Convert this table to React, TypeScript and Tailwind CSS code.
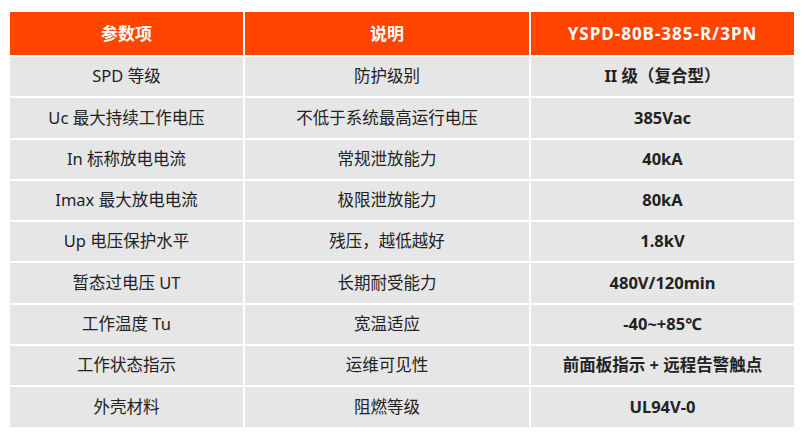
const rows: [string, string, string][] = [
  ["SPD 等级", "防护级别", "II 级（复合型）"],
  ["Uc 最大持续工作电压", "不低于系统最高运行电压", "385Vac"],
  ["In 标称放电电流", "常规泄放能力", "40kA"],
  ["Imax 最大放电电流", "极限泄放能力", "80kA"],
  ["Up 电压保护水平", "残压，越低越好", "1.8kV"],
  ["暂态过电压 UT", "长期耐受能力", "480V/120min"],
  ["工作温度 Tu", "宽温适应", "-40~+85℃"],
  ["工作状态指示", "运维可见性", "前面板指示 + 远程告警触点"],
  ["外壳材料", "阻燃等级", "UL94V-0"],
];

export default function App() {
  return (
    <div className="h-[438px] w-[806px] bg-white pl-[10px] pt-[12px] font-['Noto_Sans','Noto_Sans_CJK_SC',sans-serif] text-[16.5px] text-[#222]">
      <div className="grid w-[784px] grid-cols-[233px_284px_263px] gap-x-[2px] gap-y-[2px]">
        <div className="flex h-[43px] items-center justify-center bg-[#ff4500] text-[17px] font-bold text-white">
          参数项
        </div>
        <div className="flex h-[43px] items-center justify-center bg-[#ff4500] text-[17px] font-bold text-white">
          说明
        </div>
        <div className="flex h-[43px] items-center justify-center bg-[#ff4500] text-[17px] font-bold tracking-[1px] text-white">
          YSPD-80B-385-R/3PN
        </div>
        {rows.map((r, i) => (
          <div key={i} className="contents">
            <div className="flex h-[39.3px] items-center justify-center bg-[#e6e6e6]">{r[0]}</div>
            <div className="flex h-[39.3px] items-center justify-center bg-[#e6e6e6]">{r[1]}</div>
            <div className="flex h-[39.3px] items-center justify-center bg-[#e6e6e6] font-bold">{r[2]}</div>
          </div>
        ))}
      </div>
    </div>
  );
}
